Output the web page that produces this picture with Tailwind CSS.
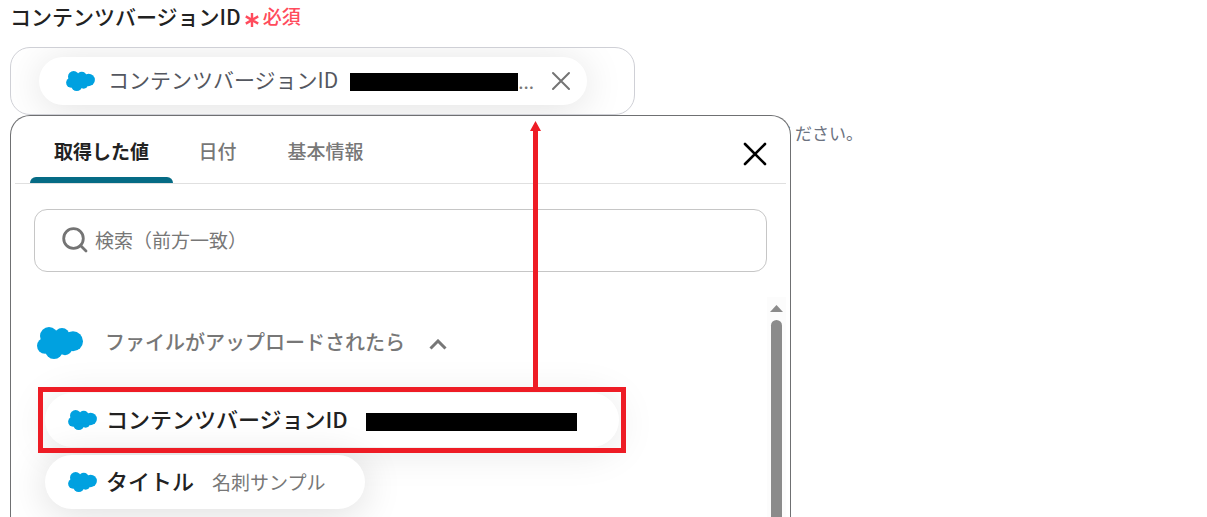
<!DOCTYPE html>
<html lang="ja">
  <head>
    <meta charset="UTF-8" />
    <meta name="viewport" content="width=device-width, initial-scale=1.0" />
    <title>コンテンツバージョンID</title>
    <script src="https://cdn.jsdelivr.net/npm/@tailwindcss/browser@4"></script>
  </head>
  <body class="bg-white font-['Noto_Sans_CJK_JP',sans-serif] text-[#222]">
    <!-- Shared cloud logo -->
    <svg class="hidden">
      <symbol id="cloud" viewBox="0 0 46 32">
        <g fill="#00a1e0">
          <circle cx="12" cy="9" r="9" />
          <circle cx="25" cy="8.600" r="7.600" />
          <circle cx="36" cy="14.300" r="10" />
          <circle cx="8" cy="18.800" r="8" />
          <circle cx="17" cy="23.300" r="8.700" />
          <circle cx="28" cy="21" r="7.200" />
          <path d="M8 10h28v12H8z" />
        </g>
      </symbol>
    </svg>

    <main class="relative h-screen overflow-hidden px-[10px] pt-[2px]">
      <div class="flex items-center gap-1">
        <h1 class="text-[21px] leading-7 font-medium">コンテンツバージョンID</h1>
        <span class="flex items-center gap-1 text-[19px] leading-7 font-medium text-[#ff4b5c]">
          <svg class="mt-2 h-4 w-[14px]" viewBox="0 0 14 16" fill="none" stroke="currentColor" stroke-width="2.4">
            <path d="M7 1v14M.8 4.400l12.400 7.200M13.200 4.400L.8 11.600" />
          </svg>
          必須
        </span>
      </div>

      <!-- Field with the selected value -->
      <div
        class="mt-[17px] flex h-[68px] w-full max-w-[625px] items-center overflow-hidden rounded-[20px] border border-[#cfd0d6] px-7"
      >
        <div
          class="flex h-12 items-center rounded-full bg-white pr-4 pl-[27px] text-[21px] text-[#54575f] shadow-[0_4px_40px_rgba(0,0,0,0.12)]"
        >
          <svg class="mr-[13px] h-5 w-[29px]"><use href="#cloud" /></svg>
          <span class="pb-[2px]">コンテンツバージョンID</span>
          <span class="mt-[2px] ml-3 h-[18px] w-42 bg-black"></span>
          <span class="text-[19px] text-[#777]">...</span>
          <button type="button" aria-label="削除" class="ml-[17px]">
            <svg class="size-5" viewBox="0 0 20 20" fill="none" stroke="#747474" stroke-width="2" stroke-linecap="round">
              <path d="M2 2l16 16M18 2L2 18" />
            </svg>
          </button>
        </div>
      </div>
      <p class="mt-[2px] ml-[768px] text-[17px] leading-8 whitespace-nowrap text-[#6b7280]">ください。</p>

      <!-- Value picker -->
      <section
        class="absolute top-[115px] bottom-0 left-[10px] flex w-[781px] flex-col rounded-t-[20px] border border-b-0 border-[#6f7072] bg-white"
      >
        <div class="mx-1 flex h-[68px] items-stretch border-b border-[#e0e0e0] pl-[15px]">
          <div role="tablist" class="flex text-[19px] font-medium text-[#777]">
            <button
              type="button"
              role="tab"
              aria-selected="true"
              class="relative w-[143px] pt-1 font-bold text-[#222]"
            >
              取得した値
              <span class="absolute inset-x-0 bottom-0 h-[6px] rounded-t-md bg-[#056b85]"></span>
            </button>
            <button type="button" role="tab" class="w-[89px] pt-1">日付</button>
            <button type="button" role="tab" class="w-[127px] pt-1">基本情報</button>
          </div>
          <button type="button" aria-label="閉じる" class="mt-2 mr-[19px] ml-auto">
            <svg class="size-6" viewBox="0 0 24 24" fill="none" stroke="#000" stroke-width="2.6" stroke-linecap="round">
              <path d="M2 2l20 20M22 2L2 22" />
            </svg>
          </button>
        </div>

        <label
          class="mx-[23px] mt-[25px] flex h-[63px] items-center gap-[7px] rounded-[13px] border border-[#c6c6c6] pl-[27px]"
        >
          <svg class="mb-[2px] size-[26px] shrink-0" viewBox="0 0 26 26" fill="none" stroke="#747474" stroke-width="2.8" stroke-linecap="round">
            <circle cx="11.500" cy="11.500" r="9.800" />
            <path d="M18.500 18.500l5.500 5.500" />
          </svg>
          <input
            type="text"
            aria-label="検索"
            placeholder="検索（前方一致）"
            class="w-full bg-transparent text-[19px] outline-none placeholder:text-[#777]"
          />
        </label>

        <div class="mt-[25px] flex min-h-0 flex-1">
          <div class="min-w-0 flex-1 overflow-hidden pl-[26px]">
            <button type="button" class="mt-7 flex items-center text-[20px] leading-8 font-medium text-[#777]">
              <svg class="mt-[2px] mr-[22px] h-8 w-[46px]"><use href="#cloud" /></svg>
              ファイルがアップロードされたら
              <svg class="mt-1 ml-6 h-[11px] w-[18px]" viewBox="0 0 18 11" fill="none" stroke="#777" stroke-width="3">
                <path d="M1.500 9.500L9 2l7.500 7.500" />
              </svg>
            </button>
            <ul class="mt-[34px] ml-2 flex flex-col items-start gap-2 text-[22px] font-medium">
              <li
                class="flex h-[54px] w-[574px] items-center rounded-full bg-white pl-[23px] shadow-[0_4px_40px_rgba(0,0,0,0.1)]"
              >
                <svg class="mr-[9px] h-5 w-[29px]"><use href="#cloud" /></svg>
                <span class="pb-[3px]">コンテンツバージョンID</span>
                <span class="mt-1 ml-[18px] h-[18px] w-[211px] bg-black"></span>
              </li>
              <li
                class="flex h-[54px] w-80 items-center rounded-full bg-white pl-[23px] shadow-[0_4px_40px_rgba(0,0,0,0.14)]"
              >
                <svg class="mr-[9px] h-5 w-[29px]"><use href="#cloud" /></svg>
                <span class="pb-[3px]">タイトル</span>
                <span class="ml-[18px] text-[19px] font-normal text-[#777]">名刺サンプル</span>
              </li>
            </ul>
          </div>
          <!-- Scrollbar -->
          <div class="mr-1 flex w-[19px] flex-col items-center bg-[#fcfcfc] pt-2">
            <svg class="h-[7px] w-[13px]" viewBox="0 0 13 7"><path fill="#8b8b8b" d="M0 7l6.500-7L13 7z" /></svg>
            <span class="mt-2 w-[11px] flex-1 rounded-t-full bg-[#8b8b8b]"></span>
          </div>
        </div>

        <!-- Callout frame and arrow -->
        <div class="absolute top-[271px] left-[27px] h-[66px] w-[588px] border-5 border-[#ee1c25]"></div>
        <svg class="absolute top-[5px] left-[519px] h-[267px] w-[11px]" viewBox="0 0 11 267" fill="#ee1c25">
          <path d="M5.500 0L11 10H8v257H3V10H0z" />
        </svg>
      </section>
    </main>
  </body>
</html>
